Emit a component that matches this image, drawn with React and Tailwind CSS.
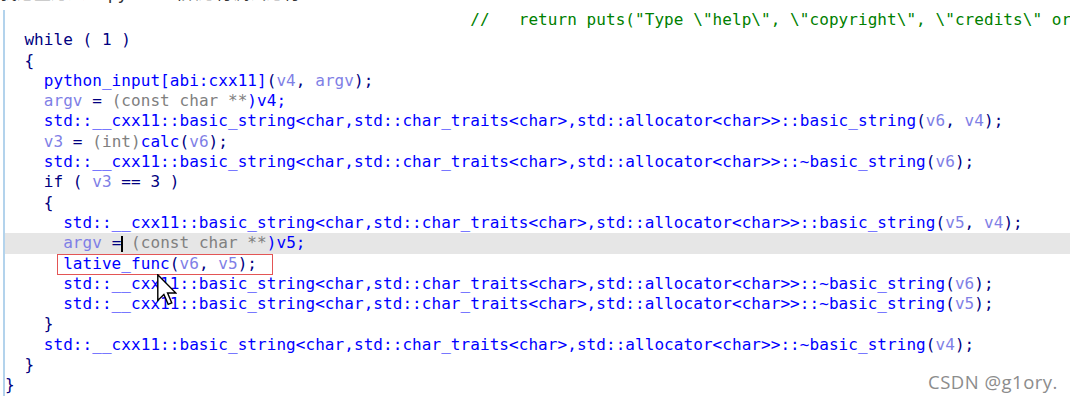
import React from "react";

const K = "text-[#000080]";
const F = "text-[#0000ff]";
const V = "text-[#7f7fe6]";
const T = "text-[#808080]";
const G = "text-[#008000]";

const S = "std::__cxx11::basic_string<char,std::char_traits<char>,std::allocator<char>>::";

const lines = [
  { segs: [[" ".repeat(48) + '//   return puts("Type \\"help\\", \\"copyright\\", \\"credits\\" or \\"license\\" for more information.");', G]] },
  { segs: [["  while ( 1 )", K]] },
  { segs: [["  {", K]] },
  { segs: [["    python_input[abi:cxx11]", F], ["(", K], ["v4", V], [", ", K], ["argv", V], [");", K]] },
  { segs: [["    ", K], ["argv", V], [" = ", K], ["(const char **", T], [")v4;", F]] },
  { segs: [["    " + S + "basic_string", F], ["(", K], ["v6", V], [", ", K], ["v4", V], [");", K]] },
  { segs: [["    ", K], ["v3", V], [" = ", K], ["(int)", T], ["calc", F], ["(", K], ["v6", V], [");", K]] },
  { segs: [["    " + S + "~basic_string", F], ["(", K], ["v6", V], [");", K]] },
  { segs: [["    if ( ", K], ["v3", V], [" == 3 )", K]] },
  { segs: [["    {", K]] },
  { segs: [["      " + S + "basic_string", F], ["(", K], ["v5", V], [", ", K], ["v4", V], [");", K]] },
  { segs: [["      ", K], ["argv", V], [" = ", K], ["(const char **", T], [")v5;", F]], hl: true },
  { segs: [["      lative_func", F], ["(", K], ["v6", V], [", ", K], ["v5", V], [");", K]], box: true },
  { segs: [["      " + S + "~basic_string", F], ["(", K], ["v6", V], [");", K]] },
  { segs: [["      " + S + "~basic_string", F], ["(", K], ["v5", V], [");", K]] },
  { segs: [["    }", K]] },
  { segs: [["    " + S + "~basic_string", F], ["(", K], ["v4", V], [");", K]] },
  { segs: [["  }", K]] },
  { segs: [["}", K]] },
];

const MONO = { fontFamily: '"DejaVu Sans Mono", monospace' };

function Line({ line }) {
  return (
    <div
      className={
        "relative h-[20.3px] whitespace-pre " + (line.hl ? "bg-[#e6e6e6]" : "")
      }
    >
      {line.segs.map((s, i) => (
        <span key={i} className={s[1]}>
          {s[0]}
        </span>
      ))}
      {line.hl && (
        <span className="absolute left-[116px] top-[3px] h-[16px] w-[2px] bg-black" />
      )}
      {line.box && (
        <span className="absolute left-[52px] top-[0px] h-[21px] w-[216px] border border-[#e35555]" />
      )}
    </div>
  );
}

export default function App() {
  return (
    <div className="relative h-[403px] w-[1070px] overflow-hidden bg-white">
      <div className="grid h-[10px] overflow-hidden">
        <div
          className="col-start-1 row-start-1 mt-[-18px] whitespace-pre text-[17px] leading-[20px] text-[#333333]"
          style={{ fontFamily: '"Noto Sans CJK SC", "Noto Sans", sans-serif' }}
        >
          {"我这里进入      python函数进行调试运行："}
        </div>
        <div
          className="col-start-1 row-start-1 mt-[-21px] pl-[5px] whitespace-pre text-[16px] leading-[20.3px] tracking-[0.06px] text-[#008000]"
          style={MONO}
        >
          {" ".repeat(48) + '//     if ( !strcmp(v4, "quit") || !strcmp(v4, "exit") ) jg;'}
        </div>
      </div>
      <div
        className="ml-[3px] border-l-2 border-[#b3d3ec] text-[16px] leading-[20.3px] tracking-[0.06px]"
        style={MONO}
      >
        {lines.map((l, i) => (
          <Line key={i} line={l} />
        ))}
      </div>
      <svg
        className="absolute left-[157px] top-[274px]"
        width="20"
        height="32"
        viewBox="0 0 12.5 20"
      >
        <path
          d="M0.5 0.5 L0.5 16.5 L4.3 12.8 L7 19 L9.2 18 L6.6 11.9 L11.8 11.9 Z"
          fill="white"
          stroke="black"
          strokeWidth="0.9"
          strokeLinejoin="miter"
        />
      </svg>
      <div
        className="absolute left-[928px] top-[370px] text-[18.5px] leading-[24px] tracking-[0.5px] text-[#8c8c8c]"
        style={{ fontFamily: '"Open Sans", "Noto Sans", sans-serif', textShadow: "1px 1px 0 #ffffff" }}
      >
        CSDN @g1ory.
      </div>
    </div>
  );
}
